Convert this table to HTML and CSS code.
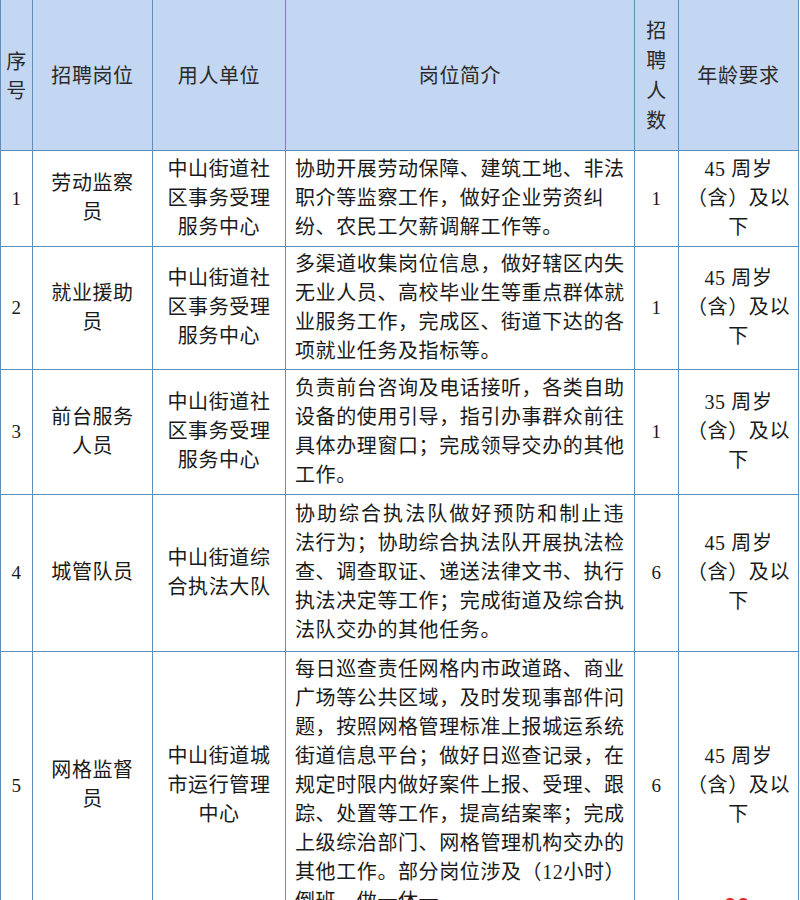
FILE: index.html
```html
<!DOCTYPE html>
<html lang="zh-CN">
<head>
<meta charset="utf-8">
<title>招聘岗位</title>
<link rel="stylesheet" href="styles.css">
</head>
<body>
<table class="jobs">
  <colgroup>
    <col class="c-no"><col class="c-post"><col class="c-unit"><col class="c-desc"><col class="c-num"><col class="c-age">
  </colgroup>
  <thead>
    <tr class="r-head">
      <th>序<br>号</th>
      <th>招聘岗位</th>
      <th>用人单位</th>
      <th>岗位简介</th>
      <th class="stack">招<br>聘<br>人<br>数</th>
      <th>年龄要求</th>
    </tr>
  </thead>
  <tbody>
    <tr class="r1">
      <td class="num">1</td>
      <td>劳动监察<br>员</td>
      <td>中山街道社<br>区事务受理<br>服务中心</td>
      <td class="desc">协助开展劳动保障、建筑工地、非法<br>职介等监察工作，做好企业劳资纠<br>纷、农民工欠薪调解工作等。</td>
      <td class="num">1</td>
      <td>45 周岁<br>（含）及以<br>下</td>
    </tr>
    <tr class="r2">
      <td class="num">2</td>
      <td>就业援助<br>员</td>
      <td>中山街道社<br>区事务受理<br>服务中心</td>
      <td class="desc">多渠道收集岗位信息，做好辖区内失<br>无业人员、高校毕业生等重点群体就<br>业服务工作，完成区、街道下达的各<br>项就业任务及指标等。</td>
      <td class="num">1</td>
      <td>45 周岁<br>（含）及以<br>下</td>
    </tr>
    <tr class="r3">
      <td class="num">3</td>
      <td>前台服务<br>人员</td>
      <td>中山街道社<br>区事务受理<br>服务中心</td>
      <td class="desc">负责前台咨询及电话接听，各类自助<br>设备的使用引导，指引办事群众前往<br>具体办理窗口；完成领导交办的其他<br>工作。</td>
      <td class="num">1</td>
      <td>35 周岁<br>（含）及以<br>下</td>
    </tr>
    <tr class="r4">
      <td class="num">4</td>
      <td>城管队员</td>
      <td>中山街道综<br>合执法大队</td>
      <td class="desc"><span class="just">协助综合执法队做好预防和制止违</span>法行为；协助综合执法队开展执法检<br>查、调查取证、递送法律文书、执行<br>执法决定等工作；完成街道及综合执<br>法队交办的其他任务。</td>
      <td class="num">6</td>
      <td>45 周岁<br>（含）及以<br>下</td>
    </tr>
    <tr class="r5">
      <td class="num">5</td>
      <td>网格监督<br>员</td>
      <td>中山街道城<br>市运行管理<br>中心</td>
      <td class="desc">每日巡查责任网格内市政道路、商业<br>广场等公共区域，及时发现事部件问<br>题，按照网格管理标准上报城运系统<br>街道信息平台；做好日巡查记录，在<br>规定时限内做好案件上报、受理、跟<br>踪、处置等工作，提高结案率；完成<br>上级综治部门、网格管理机构交办的<br>其他工作。部分岗位涉及（12小时）<br>倒班，做一休一。</td>
      <td class="num">6</td>
      <td>45 周岁<br>（含）及以<br>下</td>
    </tr>
  </tbody>
</table>
<div class="stamp">00</div>
</body>
</html>
```

FILE: styles.css
```css
html, body {
  margin: 0;
  padding: 0;
  background: #ffffff;
}

body {
  position: relative;
  width: 800px;
  height: 900px;
  overflow: hidden;
  font-family: "Liberation Serif", "Noto Sans CJK SC", serif;
  color: #1a1a1a;
}

.jobs {
  border-collapse: collapse;
  table-layout: fixed;
  width: 798px;
  font-size: 20px;
  letter-spacing: 0.6px;
  line-height: 29px;
}

.c-no { width: 32px; }
.c-post { width: 120px; }
.c-unit { width: 133px; }
.c-desc { width: 349px; }
.c-num { width: 44px; }
.c-age { width: 120px; }

.jobs th,
.jobs td {
  border: 1px solid #5f8dba;
  padding: 0 2px;
  text-align: center;
  vertical-align: middle;
  overflow: hidden;
  white-space: nowrap;
}

.jobs th {
  border-top: none;
  background: #c4d7f2;
  font-family: "Noto Sans CJK SC", sans-serif;
  font-weight: normal;
  color: #2a2a2a;
  line-height: 29px;
}

.jobs th.stack {
  line-height: 30px;
}

.r-head { height: 150px; }
.r1 { height: 96px; }
.r2 { height: 123px; }
.r3 { height: 125px; }
.r4 { height: 157px; }
.r5 { height: 268px; }

.jobs td.desc {
  text-align: left;
  padding: 0 10px 0 9px;
}

.jobs td.num {
  font-size: 19px;
}

.just {
  display: block;
  text-align: justify;
  text-align-last: justify;
}

.stamp {
  position: absolute;
  left: 724px;
  top: 895px;
  font-family: "Liberation Sans", sans-serif;
  font-weight: bold;
  font-size: 22px;
  line-height: 1;
  color: #e32626;
  letter-spacing: 1px;
}
```
